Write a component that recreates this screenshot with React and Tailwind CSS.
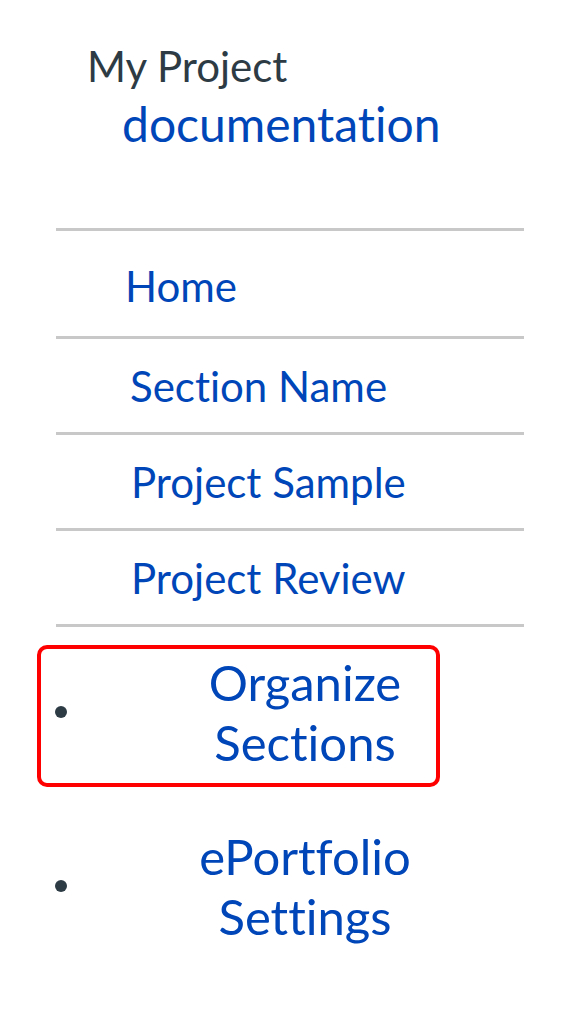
export default function App() {
  const blue = "text-[#0046b8]";
  const rows = [
    { label: "Home", h: "h-[108px] pt-[4px]", pl: "pl-[69px]" },
    { label: "Section Name", h: "h-[96px]", pl: "pl-[74px]" },
    { label: "Project Sample", h: "h-[96px]", pl: "pl-[75px]" },
    { label: "Project Review", h: "h-[96px]", pl: "pl-[75px]" },
  ];
  return (
    <div className="min-h-screen bg-white font-['Lato','Liberation_Sans',sans-serif] text-[#2d3b45] [font-variant-ligatures:none]">
      <div className="pl-[87px] pt-[41px]">
        <div className="text-[42px] leading-[50px]">My Project</div>
        <div className={`mt-[3px] pl-[35px] text-[48px] leading-[60px] ${blue}`}>documentation</div>
      </div>
      <nav className="mt-[74px] ml-[56px] w-[468px]">
        <div className="border-t-[3px] border-[#c8c8c8]">
          {rows.map((r) => (
            <div
              key={r.label}
              className={`flex items-center border-b-[3px] border-[#c8c8c8] ${r.h} ${r.pl}`}
            >
              <a className={`text-[42px] leading-[50px] ${blue}`}>{r.label}</a>
            </div>
          ))}
        </div>
      </nav>
      <ul className="mt-[18px] ml-[37px]">
        <li className="flex h-[142px] w-[403px] items-center rounded-[10px] border-4 border-[#ff0000] pb-[8px] pl-[14px]">
          <span className="h-[12px] w-[12px] shrink-0 rounded-full bg-[#2d3b45]" />
          <a className={`ml-[107px] w-[262px] text-center text-[49px] leading-[60px] ${blue}`}>
            Organize Sections
          </a>
        </li>
        <li className="mt-[32px] flex h-[142px] w-[403px] items-center border-4 border-transparent pb-[8px] pl-[14px]">
          <span className="h-[12px] w-[12px] shrink-0 rounded-full bg-[#2d3b45]" />
          <a className={`ml-[107px] w-[262px] text-center text-[49px] leading-[60px] ${blue}`}>
            ePortfolio Settings
          </a>
        </li>
      </ul>
    </div>
  );
}
